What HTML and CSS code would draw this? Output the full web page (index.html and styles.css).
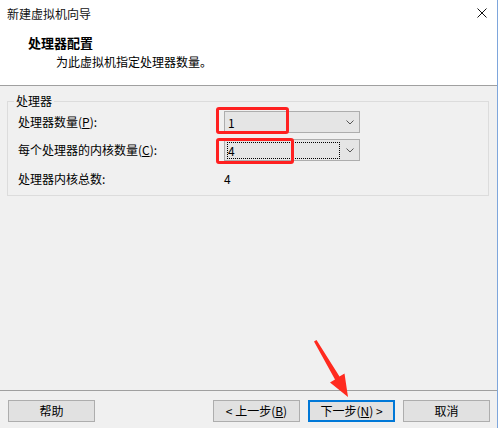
FILE: index.html
```html
<!DOCTYPE html>
<html lang="zh-CN">
<head>
<meta charset="utf-8">
<title>新建虚拟机向导</title>
<link rel="stylesheet" href="styles.css">
</head>
<body>
<div class="window">
  <div class="top">
    <div class="titlebar">
      <span class="title">新建虚拟机向导</span>
      <svg class="close" width="10" height="10" viewBox="0 0 10 10"><path d="M0.5 0.5L9.5 9.5M9.5 0.5L0.5 9.5" stroke="#111" stroke-width="1" fill="none"/></svg>
    </div>
    <div class="header">
      <div class="h-title">处理器配置</div>
      <div class="h-sub">为此虚拟机指定处理器数量。</div>
    </div>
  </div>
  <div class="content">
    <fieldset class="group">
      <legend>处理器</legend>
      <div class="row r1">
        <span class="label">处理器数量(<u>P</u>):</span>
        <div class="combo">
          <span class="val">1</span>
          <svg class="chev" width="8" height="5" viewBox="0 0 8 5"><polyline points="0.5,0.5 4,4 7.5,0.5" stroke="#555" fill="none"/></svg>
          <span class="mark m1"></span>
        </div>
      </div>
      <div class="row r2">
        <span class="label">每个处理器的内核数量(<u>C</u>):</span>
        <div class="combo">
          <span class="val focus">4</span>
          <svg class="chev" width="8" height="5" viewBox="0 0 8 5"><polyline points="0.5,0.5 4,4 7.5,0.5" stroke="#555" fill="none"/></svg>
          <span class="mark m2"></span>
        </div>
      </div>
      <div class="row r3">
        <span class="label">处理器内核总数:</span>
        <span class="total">4</span>
      </div>
    </fieldset>
  </div>
  <div class="footer">
    <button class="btn">帮助</button>
    <div class="spacer"></div>
    <button class="btn">&lt; 上一步(<u>B</u>)</button>
    <button class="btn primary">下一步(<u>N</u>) &gt;</button>
    <button class="btn">取消</button>
  </div>
  <svg class="arrow" width="498" height="428" viewBox="0 0 498 428"><polygon points="314,341.5 316.5,340 339.5,376.5 344.5,373.5 348,397 330,382.5 335,379.5" fill="#ff2a1f"/></svg>
</div>
</body>
</html>
```
FILE: styles.css
```css
html, body {
  margin: 0;
  padding: 0;
}
body {
  font-family: "Noto Sans CJK SC", "Noto Sans", sans-serif;
  font-size: 12px;
  color: #000;
  background: #f0f0f0;
}
.window {
  position: relative;
  width: 498px;
  height: 428px;
  box-sizing: border-box;
  border-right: 1px solid #7ea6dc;
  display: flex;
  flex-direction: column;
  background: #f0f0f0;
  overflow: hidden;
}
.top {
  background: #fff;
  height: 86px;
  box-sizing: border-box;
  border-bottom: 1px solid #a0a0a0;
}
.titlebar {
  height: 28px;
  display: flex;
  align-items: center;
  justify-content: space-between;
  padding: 0 10px 0 7px;
}
.title {
  line-height: 16px;
  color: #111;
}
.close {
  display: block;
  margin-top: -2px;
}
.header {
  padding: 6px 0 0 28px;
}
.h-title {
  font-weight: bold;
  font-size: 13px;
  line-height: 18px;
}
.h-sub {
  line-height: 18px;
  padding-left: 28px;
  margin-top: 1px;
}
.content {
  flex: 1;
}
.group {
  margin: 7px 8px 0 7px;
  padding: 0 6px 8px 6px;
  border: 1px solid #dcdcdc;
  min-width: 0;
}
.group legend {
  padding: 0 2px;
  line-height: 16px;
}
.row {
  display: flex;
  align-items: center;
  padding-left: 4px;
}
.r1 {
  height: 22px;
  margin-top: 2px;
}
.r2 {
  height: 22px;
  margin-top: 6px;
}
.r3 {
  height: 16px;
  margin-top: 10px;
}
.label {
  width: 206px;
  line-height: 16px;
}
.label u, .btn u {
  text-decoration: underline;
  text-underline-offset: 1px;
}
.total {
  line-height: 16px;
}
.combo {
  position: relative;
  width: 136px;
  height: 22px;
  box-sizing: border-box;
  border: 1px solid #adadad;
  background: #e5e5e5;
  display: flex;
  align-items: center;
}
.val {
  width: 113px;
  height: 17px;
  box-sizing: border-box;
  margin-left: 2px;
  border: 1px dotted transparent;
  line-height: 15px;
  padding-left: 0;
}
.val.focus {
  border-color: #000;
}
.chev {
  display: block;
  margin-left: 6px;
}
.mark {
  position: absolute;
  border: 3px solid #ff2020;
  border-radius: 3px;
  box-sizing: border-box;
}
.m1 {
  left: -9px;
  top: -5px;
  width: 73px;
  height: 27px;
}
.m2 {
  left: -9px;
  top: -2px;
  width: 78px;
  height: 26px;
}
.footer {
  height: 38px;
  box-sizing: border-box;
  border-top: 1px solid #a0a0a0;
  display: flex;
  align-items: flex-start;
  padding: 9px 7px 0 8px;
  gap: 8px;
}
.spacer {
  flex: 1;
}
.btn {
  width: 87px;
  height: 22px;
  box-sizing: border-box;
  border: 1px solid #adadad;
  background: #e1e1e1;
  font-family: inherit;
  font-size: 12px;
  line-height: 16px;
  padding: 0;
  color: #000;
}
.btn.primary {
  border: 2px solid #0078d7;
}
.arrow {
  position: absolute;
  left: 0;
  top: 0;
  pointer-events: none;
}
```
